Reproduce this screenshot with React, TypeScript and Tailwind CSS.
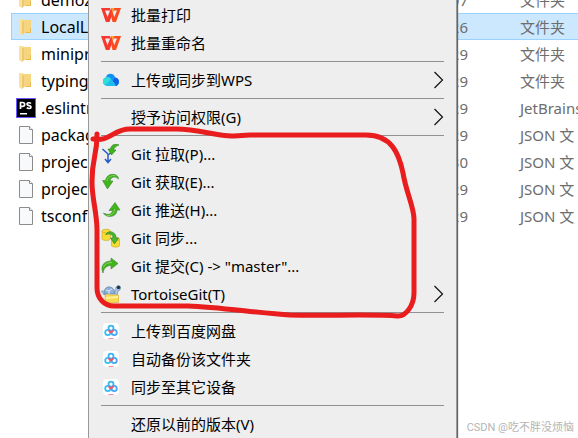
import React from 'react';

type IconName = 'wps' | 'cloud' | 'pull' | 'fetch' | 'push' | 'sync' | 'commit' | 'tortoise' | 'baidu';
type FileKind = 'folder' | 'phpstorm' | 'file';

interface FileRow {
    name: string;
    kind: FileKind;
    modified: string;
    type: string;
    selected?: boolean;
}

interface MenuEntry {
    label: string;
    icon?: IconName;
    submenu?: boolean;
}

const files: FileRow[] = [
    { name: 'demoz', kind: 'folder', modified: '07', type: '文件夹' },
    { name: 'LocalL', kind: 'folder', modified: '26', type: '文件夹', selected: true },
    { name: 'minipr', kind: 'folder', modified: '29', type: '文件夹' },
    { name: 'typing', kind: 'folder', modified: '29', type: '文件夹' },
    { name: '.eslintr', kind: 'phpstorm', modified: '29', type: 'JetBrains' },
    { name: 'packag', kind: 'file', modified: '29', type: 'JSON 文' },
    { name: 'projec', kind: 'file', modified: '30', type: 'JSON 文' },
    { name: 'projec', kind: 'file', modified: '29', type: 'JSON 文' },
    { name: 'tsconfi', kind: 'file', modified: '29', type: 'JSON 文' },
];

const menuGroups: MenuEntry[][] = [
    [
        { label: '批量打印', icon: 'wps' },
        { label: '批量重命名', icon: 'wps' },
    ],
    [{ label: '上传或同步到WPS', icon: 'cloud', submenu: true }],
    [{ label: '授予访问权限(G)', submenu: true }],
    [
        { label: 'Git 拉取(P)...', icon: 'pull' },
        { label: 'Git 获取(E)...', icon: 'fetch' },
        { label: 'Git 推送(H)...', icon: 'push' },
        { label: 'Git 同步...', icon: 'sync' },
        { label: 'Git 提交(C) -> "master"...', icon: 'commit' },
        { label: 'TortoiseGit(T)', icon: 'tortoise', submenu: true },
    ],
    [
        { label: '上传到百度网盘', icon: 'baidu' },
        { label: '自动备份该文件夹', icon: 'baidu' },
        { label: '同步至其它设备', icon: 'baidu' },
    ],
    [{ label: '还原以前的版本(V)' }],
];

const FileIcon: React.FC<{ kind: FileKind }> = ({ kind }) => {
    switch (kind) {
        case 'folder':
            return (
                <svg viewBox="0 0 20 20" className="size-5 shrink-0">
                    <path d="M7 3h8v13H7z" fill="#f6d580" />
                    <path d="M14 11h1v5h-5v-1h4z" fill="#e9bb55" />
                    <path d="M3 2h4l1 1v13l-2 2-3-2z" fill="#fbe09a" />
                    <path d="M7 3l1 2v11l-2 2V5z" fill="#e6b84f" opacity=".6" />
                </svg>
            );
        case 'phpstorm':
            return (
                <svg viewBox="0 0 20 20" className="size-5 shrink-0">
                    <rect x=".5" y=".5" width="19" height="19" fill="#000" stroke="#6b57ff" />
                    <path d="M4.500 11V4.500h2.200a1.800 1.800 0 0 1 0 3.800H4.500M15 5.500c-1-1-4-1.200-4 .6 0 2 4 .9 4 2.900 0 2-3 1.800-4.300.7" fill="none" stroke="#fff" strokeWidth="1.700" />
                    <path d="M4 15h7v1.500H4z" fill="#fff" />
                </svg>
            );
        default:
            return (
                <svg viewBox="0 0 20 20" className="size-5 shrink-0">
                    <path d="M3.500 1.500h10l3 3v14h-13z" fill="#f8f9fa" stroke="#8c8c8c" />
                    <path d="M13.500 1.500v3h3" fill="#fff" stroke="#8c8c8c" />
                </svg>
            );
    }
};

const MenuIcon: React.FC<{ name: IconName }> = ({ name }) => {
    switch (name) {
        case 'wps':
            return (
                <svg viewBox="0 0 20 20" className="size-5">
                    <path d="M0 3h9v2.500H4L6.500 12 10 3h3.500L8.500 17H4.800z" fill="#f8382c" />
                    <path d="M9.500 8.500L11 5.500 13.300 12 16 5.500h-4L13 3h7l-5 14h-3.500z" fill="#ff4a1e" />
                    <path d="M10 3h3.500L11.700 8z" fill="#ffa13b" />
                </svg>
            );
        case 'cloud':
            return (
                <svg viewBox="0 0 20 20" className="size-5">
                    <path d="M5 8C5 2.500 13.500 2.500 14 7.500c5.500.5 5 8.500 0 8.500H6z" fill="#1290f3" />
                    <path d="M14 7.500c5.500.5 5 8.500 0 8.500H8.500z" fill="#1262e8" />
                    <path d="M2 11.500a4.500 4.500 0 0 1 7.800-3L15 15l-1 1H6.500A4.500 4.500 0 0 1 2 11.500z" fill="#1fbdec" />
                    <path d="M2 11.500a4.500 4.500 0 0 1 7.800-3C9 11 6 14 3.500 15A4.500 4.500 0 0 1 2 11.500z" fill="#30dcdc" />
                </svg>
            );
        case 'pull':
            return (
                <svg viewBox="0 0 20 20" className="size-5">
                    <path d="M1.500 5l5.500 5m5-3l-5 4v7M4 15l3 3.500 3-3.500" fill="none" stroke="#2458c5" strokeWidth="1.500" />
                    <path d="M18 1c-4-2-8 0-8.500 4H7l3.500 6 4.500-5h-2.300c.3-2.500 2.300-4 5.300-5z" fill="#40b516" stroke="#287b24" strokeWidth=".6" />
                </svg>
            );
        case 'fetch':
            return (
                <svg viewBox="0 0 20 20" className="size-5">
                    <path d="M17.500 7C17.500 1 6 0 4.500 8.500H1.500L6.500 17 12 9H9c.5-4 5-5.500 8.500-2z" fill="#40b51a" stroke="#4b8c44" strokeWidth=".7" />
                    <path d="M6 9C6.500 5 11 2.800 14.500 3.800" fill="none" stroke="#88d760" />
                </svg>
            );
        case 'push':
            return (
                <svg viewBox="0 0 20 20" className="size-5">
                    <path d="M2.500 13c2 5 13.500 5 13.500-3h3L14 2.500 8 10.500h3.500c-.5 4-5 5-9 2.500z" fill="#40b51a" stroke="#4b8c44" strokeWidth=".7" />
                    <path d="M6 15.500c5 0 7.500-2.500 7.500-6.500" fill="none" stroke="#88d760" />
                </svg>
            );
        case 'sync':
            return (
                <svg viewBox="0 0 20 20" className="size-5">
                    <g fill="#f7dc33" stroke="#d0ac35" strokeWidth=".7">
                        <path d="M1 3v8c1 2 7.500 2 8.500 0V3" />
                        <ellipse cx="5.200" cy="3" rx="4.200" ry="1.800" />
                        <path d="M10.500 11v7c1 1.500 7 1.500 8 0v-7" />
                        <ellipse cx="14.500" cy="11" rx="4" ry="1.800" />
                    </g>
                    <path d="M4.500 6.500C8 1.500 15.500 4 15 10h2.500l-4 6-4-6H12c0-3.500-3-5-7.500-3.500z" fill="#49b82b" stroke="#398b38" strokeWidth=".7" />
                </svg>
            );
        case 'commit':
            return (
                <svg viewBox="0 0 20 20" className="size-5">
                    <path d="M2 17C-1 10 3 5 10 5V2l7 5.500-7 5.500v-3.500c-4 0-7 2-8 7.500z" fill="#40b51a" stroke="#4b8c44" strokeWidth=".7" />
                    <path d="M2.500 11c1-3 4-4.500 8.500-4.500" fill="none" stroke="#88d760" />
                </svg>
            );
        case 'tortoise':
            return (
                <svg viewBox="0 0 20 20" className="size-5">
                    <path d="M0 7h3l2 3-2 1z" fill="#a9c8e6" stroke="#7391ae" strokeWidth=".6" />
                    <path d="M3 10C3 4 6 2.500 9 3c3 .5 5 3 5 7z" fill="#8fb2dc" stroke="#607d99" strokeWidth=".7" />
                    <path d="M5 6l3 1 3-2M8 7v3" fill="none" stroke="#dceafa" />
                    <path d="M13 9l2-3c-1-3 1-4.500 3-4.500 2.500 1 2 5-1 5.500l-1 4z" fill="#a9c8e6" stroke="#587896" strokeWidth=".6" />
                    <circle cx="17.500" cy="3.500" r="1.800" fill="#23384e" />
                    <path d="M4 11.500l3-1.500 2 1h8.500v7.500l-13 .5z" fill="#f7d951" stroke="#dfb53c" strokeWidth=".7" />
                    <path d="M5 13l12-1v2L5 15z" fill="#fff09a" />
                </svg>
            );
        case 'baidu':
            return (
                <svg viewBox="0 0 20 20" className="size-5">
                    <rect x="2" y="2" width="16" height="16" rx="4" fill="#fff" />
                    <g fill="none" strokeWidth="1.800">
                        <circle cx="6.800" cy="11.500" r="2.600" stroke="#35c1f8" />
                        <circle cx="13.200" cy="11.500" r="2.600" stroke="#46a6f2" />
                        <circle cx="10" cy="7.200" r="2.500" stroke="#37b5f4" />
                        <path d="M7.500 9.300l2.500 2.200 2.500-2.200" stroke="#f1556c" />
                    </g>
                    <path d="M7.500 17.500h5" stroke="#f58b9b" />
                </svg>
            );
    }
};

const MenuItem: React.FC<{ entry: MenuEntry }> = ({ entry }) => (
    <button type="button" role="menuitem" className="flex h-7 w-full items-center px-3 text-left">
        <span className="mr-2.5 size-5 shrink-0">{entry.icon && <MenuIcon name={entry.icon} />}</span>
        <span className="flex-1 whitespace-nowrap">{entry.label}</span>
        {entry.submenu && (
            <svg viewBox="0 0 10 18" className="h-[18px] w-2.5">
                <path d="M.5 1l8 8-8 8" fill="none" stroke="#111" strokeWidth="1.200" />
            </svg>
        )}
    </button>
);

export default function App() {
    return (
        <main className="relative h-screen overflow-hidden bg-white font-['Noto_Sans','Noto_Sans_CJK_SC',sans-serif] text-[15px] leading-5 text-black">
            <div className="-mt-3.5 pl-[11px]">
                <table className="w-full table-fixed border-collapse">
                    <colgroup>
                        <col className="w-[409px]" />
                        <col className="w-12" />
                        <col />
                    </colgroup>
                    <tbody>
                        {files.map((file, index) => (
                            <tr
                                key={index}
                                className={`h-[27px] ${file.selected ? 'bg-[#cce8ff] shadow-[inset_1px_1px_#99d1ff,inset_0_-1px_#99d1ff]' : ''}`}
                            >
                                <td className="p-0 pl-[5px]">
                                    <div className="flex items-center gap-[5px]">
                                        <FileIcon kind={file.kind} />
                                        <span className="text-base leading-5">{file.name}</span>
                                    </div>
                                </td>
                                <td className="p-0 text-right text-[#6d6d6d]">{file.modified}</td>
                                <td className="overflow-hidden p-0 pl-[52px] whitespace-nowrap text-[#6d6d6d]">{file.type}</td>
                            </tr>
                        ))}
                    </tbody>
                </table>
            </div>

            <div
                role="menu"
                className="absolute inset-y-0 left-[88px] w-[369px] border-x border-[#999] bg-[#eee] pt-px shadow-[1px_0_1px_#666]"
            >
                {menuGroups.map((group, index) => (
                    <div key={index}>
                        {index > 0 && <hr className="mx-3 my-1 border-[#919191]" />}
                        {group.map((entry) => (
                            <MenuItem key={entry.label} entry={entry} />
                        ))}
                    </div>
                ))}
            </div>

            {/* hand-drawn ring around the Git entries */}
            <svg viewBox="0 0 330 196" className="pointer-events-none absolute top-[125px] left-[88px] h-[196px] w-[330px]">
                <path
                    d="M5 14C22 17 25 4 42 4H88C112 4 130 12 146 11L162 10H278C304 10 311 29 315 48C318 67 326 82 326 94V168C326 180 318 192 309 191C291 189 232 191 202 190C170 188 130 182 100 181H26C16 181 9 173 9 163V105C9 88 4 74 4 57C4 31 9 33 9 9"
                    fill="none"
                    stroke="#e91d1d"
                    strokeWidth="5"
                    strokeLinecap="round"
                    strokeLinejoin="round"
                />
            </svg>

            <p className="absolute right-1 bottom-0.5 font-['Roboto','Noto_Sans_CJK_SC',sans-serif] text-[11px] leading-4 text-[#b5b5b5]">
                CSDN @吃不胖没烦恼
            </p>
        </main>
    );
}
